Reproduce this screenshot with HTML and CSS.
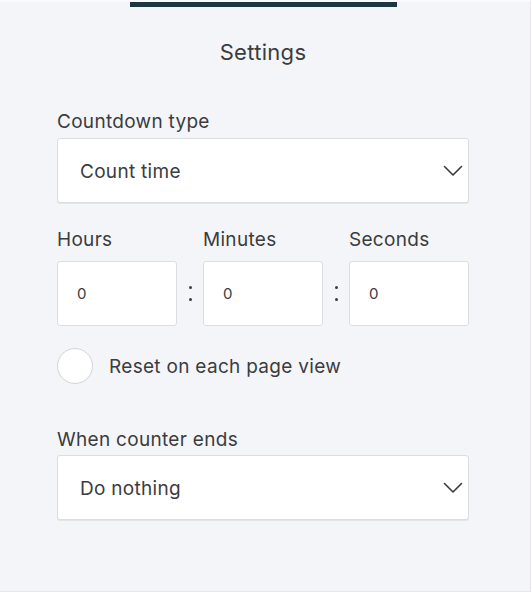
FILE: index.html
```html
<!DOCTYPE html>
<html>
<head>
<meta charset="utf-8">
<link rel="stylesheet" href="styles.css">
</head>
<body>
<div class="panel">
  <div class="topbar"></div>
  <h1 class="title">Settings</h1>

  <div class="field field-first">
    <div class="label">Countdown type</div>
    <div class="select">
      <span class="value">Count time</span>
      <svg class="chev" width="20" height="12" viewBox="0 0 20 12"><path d="M1.5 1.5 L10 10 L18.5 1.5" fill="none" stroke="#3a3a3a" stroke-width="1.6" stroke-linecap="round" stroke-linejoin="round"/></svg>
    </div>
  </div>

  <div class="time-row">
    <div class="time-col">
      <div class="label">Hours</div>
      <div class="box">0</div>
    </div>
    <div class="colon"><span></span><span></span></div>
    <div class="time-col">
      <div class="label">Minutes</div>
      <div class="box">0</div>
    </div>
    <div class="colon"><span></span><span></span></div>
    <div class="time-col">
      <div class="label">Seconds</div>
      <div class="box">0</div>
    </div>
  </div>

  <div class="check-row">
    <div class="circle"></div>
    <div class="check-label">Reset on each page view</div>
  </div>

  <div class="field field-last">
    <div class="label">When counter ends</div>
    <div class="select">
      <span class="value">Do nothing</span>
      <svg class="chev" width="20" height="12" viewBox="0 0 20 12"><path d="M1.5 1.5 L10 10 L18.5 1.5" fill="none" stroke="#3a3a3a" stroke-width="1.6" stroke-linecap="round" stroke-linejoin="round"/></svg>
    </div>
  </div>
</div>
</body>
</html>
```

FILE: styles.css
```css
html, body {
  margin: 0;
  padding: 0;
  background: #ffffff;
}

body {
  font-family: Inter, "Noto Sans", "Liberation Sans", sans-serif;
  color: #3b3c3e;
  letter-spacing: 0.3px;
}

.panel {
  box-sizing: border-box;
  width: 531px;
  height: 592px;
  border-top: 2px solid #fbfbfd;
  border-right: 1px solid #e6e7ec;
  border-bottom: 1px solid #e6e7ec;
  background: #f4f5f9;
  padding: 0 61px 0 57px;
  display: flex;
  flex-direction: column;
}

.topbar {
  width: 267px;
  height: 5px;
  background: #1d3644;
  margin-left: 73px;
}

.title {
  margin: 33px 0 0;
  font-size: 22px;
  line-height: 24px;
  font-weight: 400;
  text-align: center;
}

.label {
  font-size: 19px;
  line-height: 22px;
  padding-top: 1px;
}

.field-first {
  margin-top: 46px;
}

.field .label {
  margin-bottom: 5px;
}

.select {
  box-sizing: border-box;
  height: 65px;
  background: #ffffff;
  border: 1px solid #dcdde1;
  border-radius: 3px;
  display: flex;
  align-items: center;
  justify-content: space-between;
  padding: 0 5px 0 22px;
  font-size: 19px;
  box-shadow: 0 1px 0 #e4e5e9;
}

.value {
  padding-top: 2px;
}

.time-row {
  margin-top: 25px;
  display: flex;
  align-items: flex-end;
}

.time-col {
  width: 120px;
  display: flex;
  flex-direction: column;
}

.time-col .label {
  margin-bottom: 10px;
}

.box {
  box-sizing: border-box;
  height: 65px;
  background: #ffffff;
  border: 1px solid #dcdde1;
  border-radius: 3px;
  display: flex;
  align-items: center;
  padding-left: 19px;
  font-size: 15px;
  letter-spacing: 0;
}

.colon {
  width: 26px;
  height: 65px;
  display: flex;
  flex-direction: column;
  align-items: center;
  justify-content: center;
  gap: 9px;
}

.colon span {
  width: 3px;
  height: 3px;
  border-radius: 50%;
  background: #3b3c3e;
}

.check-row {
  margin-top: 22px;
  display: flex;
  align-items: center;
  gap: 16px;
}

.circle {
  box-sizing: border-box;
  width: 36px;
  height: 36px;
  border-radius: 50%;
  background: #ffffff;
  border: 1px solid #d3d4d8;
}

.check-label {
  font-size: 19px;
  line-height: 22px;
  padding-top: 2px;
}

.field-last {
  margin-top: 44px;
}

.field-last .label {
  margin-bottom: 4px;
}
```
